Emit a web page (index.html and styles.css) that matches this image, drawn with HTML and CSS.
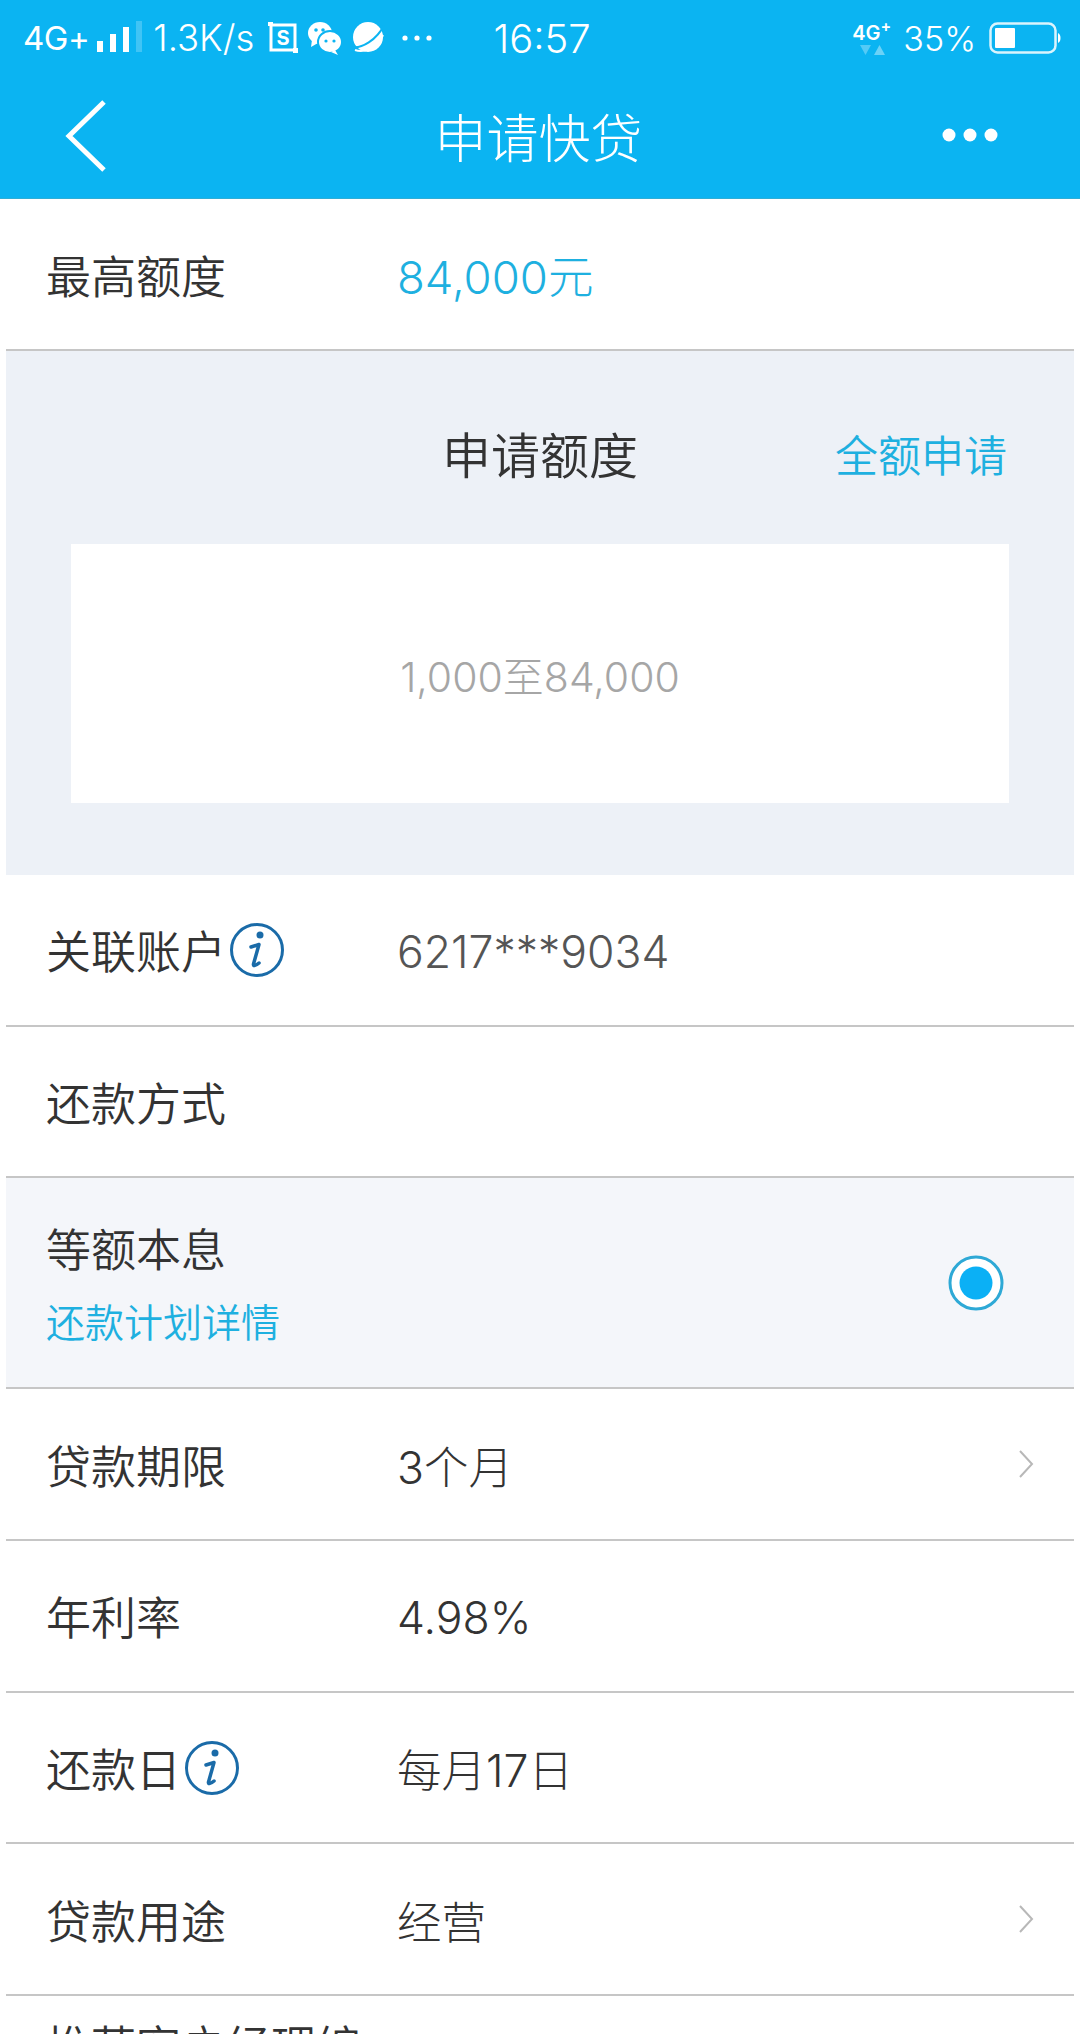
FILE: index.html
```html
<!DOCTYPE html>
<html lang="zh-CN">
<head>
    <meta charset="UTF-8">
    <meta name="viewport" content="width=device-width, initial-scale=1.0">
    <title>申请快贷</title>
    <link rel="stylesheet" href="styles.css">
</head>
<body>
    <!-- 顶部蓝色区域 -->
    <header class="top">
        <div class="status">
            <div class="status-left">
                <span class="net">4G+</span>
                <svg class="signal" width="48" height="34" viewBox="0 0 48 34">
                    <rect x="0" y="20" width="6" height="11" fill="#fff"/>
                    <rect x="13" y="13" width="6" height="18" fill="#fff"/>
                    <rect x="26" y="6" width="6" height="25" fill="#fff"/>
                    <rect x="39" y="0" width="6" height="31" fill="#fff" opacity=".22"/>
                </svg>
                <span class="speed">1.3K/s</span>
                <svg class="app-icon" width="32" height="34" viewBox="0 0 32 34">
                    <path d="M4 4H28V29H4Z" fill="none" stroke="#fff" stroke-width="3"/>
                    <path d="M1 1H6V5H1ZM26 27H31V32H26Z" fill="#fff"/>
                    <text x="16" y="24" class="app-s">S</text>
                </svg>
                <svg class="app-icon tight" width="34" height="34" viewBox="0 0 34 34">
                    <ellipse cx="12" cy="12" rx="12" ry="11" fill="#fff"/>
                    <path d="M4 19L3 26L10 22Z" fill="#fff"/>
                    <ellipse cx="22" cy="21" rx="12" ry="11" fill="#fff" stroke="#0bb4f2" stroke-width="2"/>
                    <path d="M27 29L30 34L23 31Z" fill="#fff"/>
                    <circle cx="8" cy="9" r="1.8" fill="#0bb4f2"/>
                    <circle cx="15" cy="9" r="1.8" fill="#0bb4f2"/>
                    <circle cx="18" cy="20" r="1.6" fill="#0bb4f2"/>
                    <circle cx="26" cy="20" r="1.6" fill="#0bb4f2"/>
                </svg>
                <svg class="app-icon tight" width="34" height="34" viewBox="0 0 34 34">
                    <circle cx="17" cy="16" r="15" fill="#fff"/>
                    <path d="M1 26C10 28 26 19 33 4" fill="none" stroke="#0bb4f2" stroke-width="2"/>
                    <path d="M4 29C12 32 26 28 32 14" fill="none" stroke="#fff" stroke-width="2"/>
                </svg>
                <svg class="app-icon more-small" width="32" height="8" viewBox="0 0 32 8">
                    <circle cx="4" cy="4" r="2.6" fill="#fff"/>
                    <circle cx="16" cy="4" r="2.6" fill="#fff"/>
                    <circle cx="28" cy="4" r="2.6" fill="#fff"/>
                </svg>
            </div>
            <div class="time">16:57</div>
            <div class="status-right">
                <div class="net-small">
                    <span>4G<sup>+</sup></span>
                    <svg width="28" height="11" viewBox="0 0 28 11">
                        <path d="M2 1H13L7.500 11Z" fill="#fff" opacity=".3"/>
                        <path d="M16 11H27L21.500 1Z" fill="#fff" opacity=".4"/>
                    </svg>
                </div>
                <span class="percent">35%</span>
                <svg width="72" height="32" viewBox="0 0 72 32">
                    <rect x="1.500" y="1.500" width="65" height="29" rx="7" fill="none" stroke="#fff" stroke-width="2.500" opacity=".85"/>
                    <rect x="6" y="6" width="20" height="20" rx="1" fill="#fff"/>
                    <path d="M69 11C71 12 71.500 14 71.500 16S71 20 69 21Z" fill="#fff"/>
                </svg>
            </div>
        </div>
        <div class="nav">
            <svg class="back" width="44" height="72" viewBox="0 0 44 72">
                <path d="M40 2L5 36L40 70" fill="none" stroke="#fff" stroke-width="5"/>
            </svg>
            <h1 class="titulo">申请快贷</h1>
            <svg class="more" width="56" height="14" viewBox="0 0 56 14">
                <circle cx="7" cy="7" r="6.500" fill="#fff"/>
                <circle cx="28" cy="7" r="6.500" fill="#fff"/>
                <circle cx="49" cy="7" r="6.500" fill="#fff"/>
            </svg>
        </div>
    </header>

    <main class="list">
        <div class="row first">
            <span class="label">最高额度</span>
            <span class="value azul">84,000元</span>
        </div>

        <!-- 申请额度 -->
        <section class="amount">
            <div class="amount-head">
                <h2 class="amount-title">申请额度</h2>
                <a class="amount-all">全额申请</a>
            </div>
            <div class="amount-box">1,000至84,000</div>
        </section>

        <div class="row">
            <span class="label">关联账户<svg class="info" width="56" height="56" viewBox="0 0 56 56">
                <circle cx="28" cy="28" r="25.500" fill="none" stroke="#1a6ba8" stroke-width="3"/>
                <circle cx="31" cy="13" r="3.500" fill="#1a6ba8"/>
                <path d="M22 25L30 22.500L24.500 42C24 44 26 44.500 30 41" fill="none" stroke="#1a6ba8" stroke-width="3.500" stroke-linecap="round" stroke-linejoin="round"/>
            </svg></span>
            <span class="value gris num">6217***9034</span>
        </div>
        <div class="row">
            <span class="label">还款方式</span>
        </div>
        <div class="row plan">
            <div class="plan-text">
                <span class="label">等额本息</span>
                <a class="plan-link">还款计划详情</a>
            </div>
            <svg class="radio" width="56" height="56" viewBox="0 0 56 56">
                <circle cx="28" cy="28" r="26" fill="#fff" stroke="#2ea9d6" stroke-width="3"/>
                <circle cx="28" cy="28" r="16.500" fill="#0bb0f5"/>
            </svg>
        </div>
        <div class="row">
            <span class="label">贷款期限</span>
            <span class="value">3个月</span>
            <svg class="chevron" width="16" height="30" viewBox="0 0 16 30">
                <path d="M2 2L14 15L2 28" fill="none" stroke="#b8b8b8" stroke-width="2"/>
            </svg>
        </div>
        <div class="row">
            <span class="label">年利率</span>
            <span class="value num">4.98%</span>
        </div>
        <div class="row">
            <span class="label">还款日<svg class="info" width="56" height="56" viewBox="0 0 56 56">
                <circle cx="28" cy="28" r="25.500" fill="none" stroke="#1a6ba8" stroke-width="3"/>
                <circle cx="31" cy="13" r="3.500" fill="#1a6ba8"/>
                <path d="M22 25L30 22.500L24.500 42C24 44 26 44.500 30 41" fill="none" stroke="#1a6ba8" stroke-width="3.500" stroke-linecap="round" stroke-linejoin="round"/>
            </svg></span>
            <span class="value">每月17日</span>
        </div>
        <div class="row">
            <span class="label">贷款用途</span>
            <span class="value">经营</span>
            <svg class="chevron" width="16" height="30" viewBox="0 0 16 30">
                <path d="M2 2L14 15L2 28" fill="none" stroke="#b8b8b8" stroke-width="2"/>
            </svg>
        </div>
        <div class="row last">
            <span class="label">推荐客户经理编</span>
        </div>
    </main>
</body>
</html>
```

FILE: styles.css
```css
body {
    margin: 0;
    height: 2034px;
    overflow: hidden;
    background: #fff;
    color: #333;
    font-family: Inter, "Noto Sans CJK SC", sans-serif;
}

/* cabecera */
.top {
    height: 198px;
    background: #0bb4f2;
    border-bottom: 1px solid #2eaed6;
    color: #fff;
}
.status {
    height: 76px;
    padding: 0 19px 0 23px;
    display: grid;
    grid-template-columns: 1fr auto 1fr;
    align-items: center;
}
.status-left {
    display: flex;
    align-items: center;
}
.net {
    font-size: 33px;
    letter-spacing: -.5px;
}
.signal {
    margin-left: 8px;
}
.speed {
    margin-left: 8px;
    font-size: 36.5px;
    font-weight: 300;
}
.app-icon {
    margin-left: 13px;
}
.tight {
    margin-left: 9px;
}
.app-s {
    font-size: 20px;
    font-weight: 700;
    fill: #fff;
    text-anchor: middle;
    font-family: Inter, sans-serif;
}
.more-small {
    margin-left: 16px;
}
.time {
    font-size: 40px;
    font-weight: 300;
}
.status-right {
    display: flex;
    align-items: center;
    justify-content: flex-end;
}
.net-small {
    display: flex;
    flex-direction: column;
    align-items: center;
    font-size: 20px;
    font-weight: 600;
    line-height: 22px;
    margin-right: 12px;
}
.net-small sup {
    font-size: 16px;
    line-height: 0;
}
.percent {
    font-size: 34px;
    font-weight: 300;
    margin-right: 13px;
}
.nav {
    height: 122px;
    padding: 0 82px 0 64px;
    display: grid;
    grid-template-columns: 1fr auto 1fr;
    align-items: center;
}
.back {
    margin-top: -3px;
}
.titulo {
    margin: -3px 0 0 15px;
    font-size: 52px;
    font-weight: 300;
    font-family: "Noto Sans CJK SC", sans-serif;
}
.more {
    justify-self: end;
    margin-top: -5px;
}

/* filas */
.list {
    margin: 0 6px;
}
.row {
    height: 151.7px;
    box-sizing: border-box;
    padding-left: 40px;
    border-bottom: 2px solid #c6c6c6;
    display: flex;
    align-items: center;
}
.first {
    height: 152px;
}
.last {
    border-bottom: 0;
    align-items: flex-start;
    padding-top: 16px;
}
.label {
    width: 351px;
    flex-shrink: 0;
    display: flex;
    align-items: center;
    font-size: 45px;
    font-weight: 350;
    color: #333;
    font-family: "Noto Sans CJK SC", sans-serif;
}
.value {
    font-size: 44.5px;
    font-weight: 300;
    color: #333;
}
.azul {
    color: #1eb0e0;
    font-size: 45.5px;
}
.gris {
    color: #555;
}
.num {
    padding-top: 4px;
}
.info {
    margin-left: 3px;
}
.chevron {
    margin-left: auto;
    margin-right: 40px;
}

/* bloque de importe */
.amount {
    height: 524px;
    box-sizing: border-box;
    padding: 0 65px;
    background: #edf1f7;
}
.amount-head {
    height: 193px;
    padding-top: 10px;
    box-sizing: border-box;
    display: flex;
    align-items: center;
    justify-content: center;
    position: relative;
}
.amount-title {
    margin: 0;
    font-size: 49px;
    font-weight: 350;
    font-family: "Noto Sans CJK SC", sans-serif;
}
.amount-all {
    position: absolute;
    right: 2px;
    font-size: 43px;
    font-weight: 350;
    color: #1eb0e0;
    font-family: "Noto Sans CJK SC", sans-serif;
}
.amount-box {
    height: 259px;
    background: #fff;
    display: flex;
    align-items: center;
    justify-content: center;
    font-size: 41px;
    font-weight: 300;
    color: #a6a6a6;
}

/* fila de plan */
.plan {
    height: 211px;
    background: #f4f6fa;
    justify-content: space-between;
}
.plan-text {
    display: flex;
    flex-direction: column;
    gap: 12px;
    margin-top: -2px;
}
.plan-link {
    font-size: 39px;
    font-weight: 350;
    color: #1eb0e0;
    font-family: "Noto Sans CJK SC", sans-serif;
}
.radio {
    margin-right: 70px;
}
```
